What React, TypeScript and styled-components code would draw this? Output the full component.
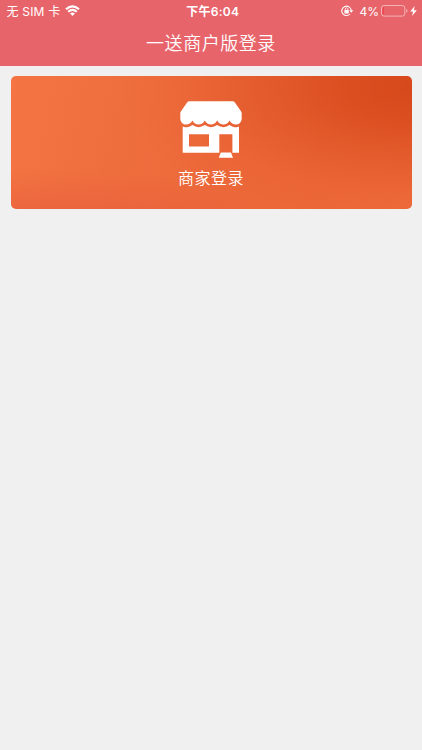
import React from "react";
import styled, { createGlobalStyle } from "styled-components";

const GlobalStyle = createGlobalStyle`
  html, body {
    margin: 0;
    background: #f0f0f0;
  }
  body {
    font-family: Inter, "Noto Sans CJK SC", sans-serif;
    color: #fff;
    overflow: hidden;
  }
`;

const Screen = styled.div`
  min-height: 100vh;
  display: flex;
  flex-direction: column;
`;

const Header = styled.header`
  height: 65.6px;
  background: #e8646b;
  display: flex;
  flex-direction: column;
`;

const StatusBar = styled.div`
  height: 22px;
  display: grid;
  grid-template-columns: 1fr auto 1fr;
  align-items: start;
  padding: 0 5px 0 6.5px;
  box-sizing: border-box;
  white-space: nowrap;
`;

const StatusGroup = styled.div<{ $end?: boolean }>`
  display: flex;
  align-items: center;
  justify-content: ${(p) => (p.$end ? "flex-end" : "flex-start")};
  height: 21px;
`;

const StatusText = styled.span<{ $bold?: boolean; $spacing?: number; $left?: number }>`
  display: block;
  font-size: 12px;
  line-height: 23px;
  font-weight: ${(p) => (p.$bold ? 600 : 400)};
  letter-spacing: ${(p) => p.$spacing ?? 0}px;
  margin: 0 0 -2px ${(p) => p.$left ?? 0}px;
`;

const Glyph = styled.svg<{ $left?: number }>`
  display: block;
  flex: none;
  margin-left: ${(p) => p.$left ?? 0}px;
`;

const Title = styled.h1`
  margin: 0;
  height: 43px;
  line-height: 40px;
  text-align: center;
  font-size: 18px;
  font-weight: 350;
  letter-spacing: 0.55px;
  font-family: "Noto Sans CJK SC", sans-serif;
`;

const Content = styled.main`
  padding: 10px 10.5px;
`;

const LoginCard = styled.button`
  width: 100%;
  height: 133.5px;
  padding: 25px 0 0;
  border: 0;
  border-radius: 5px;
  display: flex;
  flex-direction: column;
  align-items: center;
  color: #fff;
  background:
    radial-gradient(ellipse 300px 140px at 102% 8%, #d6481a 0%, rgba(216, 74, 28, 0.85) 25%, rgba(220, 80, 32, 0.52) 52%, rgba(228, 90, 42, 0.2) 78%, rgba(236, 104, 58, 0) 100%),
    radial-gradient(ellipse 230px 60px at 8% 115%, rgba(231, 92, 59, 0.85), rgba(235, 100, 60, 0) 100%),
    linear-gradient(102deg, #f47543 0%, #ef6e3e 28%, #ec683a 52%, #ec6839 75%, #ee6b3b 100%);
`;

const CardLabel = styled.span`
  margin-top: 6px;
  line-height: 26px;
  font-family: "Noto Sans CJK SC", sans-serif;
  font-size: 16px;
  font-weight: 350;
  letter-spacing: 0.5px;
`;

const WifiIcon = () => (
  <Glyph $left={5} width="15" height="12" viewBox="0 0 15 12" fill="none" stroke="#fff">
    <path d="M1 4.3Q7.5-1.7 14 4.3" strokeWidth="2.1" />
    <path d="M3.2 6.8Q7.5 3 11.8 6.8" strokeWidth="2" />
    <path d="M5.1 8.5Q7.5 6.6 9.9 8.5L7.5 11Z" fill="#fff" stroke="none" />
  </Glyph>
);

const RotationLockIcon = () => (
  <Glyph width="13" height="12" viewBox="0 0 13 12" fill="none" stroke="#fff">
    <path d="M9 9A4.7 4.7 0 1 1 10.2 5.4" strokeWidth="1.1" />
    <path d="M8.2 5.2H12.3L10.2 7.8Z" fill="#fff" stroke="none" />
    <rect x="3.4" y="5" width="4.4" height="3.4" rx=".4" fill="#fff" stroke="none" />
    <path d="M4.3 5.3V4.1a1.3 1.3 0 0 1 2.6 0v1.2" strokeWidth=".8" />
  </Glyph>
);

const BatteryIcon = () => (
  <Glyph $left={2} width="27" height="12" viewBox="0 0 27 12">
    <rect x=".5" y=".5" width="23.3" height="10.6" rx="2.5" fill="none" stroke="#fff" strokeOpacity=".5" />
    <path d="M2.6 2Q1.8 2 1.8 3v5.6q0 1 .8 1Z" fill="#f5323c" />
    <path d="M25.2 3.9q1.3.6 1.3 1.9t-1.3 1.9Z" fill="#fff" fillOpacity=".5" />
  </Glyph>
);

const ChargingIcon = () => (
  <Glyph $left={2} width="7" height="10" viewBox="0 0 7 10">
    <path d="M4.7 0 .2 5.5H3L2.1 10 6.8 4.2H3.9Z" fill="#fff" />
  </Glyph>
);

const StoreIcon = () => (
  <Glyph width="62" height="57" viewBox="0 0 62 57" fill="#fff">
    <path d="M9.4.3H52.8Q54 .3 54.7 1.3L61 10.2Q61.7 11.3 61.7 12.5V17.2C61.7 24.8 52.5 25.4 49.6 19.6C47 24.8 39.8 24.8 37.2 19.6C34.6 24.8 27.4 24.8 24.8 19.6C22.2 24.8 15 24.8 12.4 19.6C9.5 25.4.3 24.8.3 17.2V12.5Q.3 11.3 1 10.2L7.3 1.3Q8 .3 9.4.3Z" />
    <path
      fillRule="evenodd"
      d="M2.7 25.4Q8.7 27.6 12.4 24.1Q18.6 28.4 24.8 24.1Q31 28.4 37.2 24.1Q43.4 28.4 49.6 24.1Q53.3 27.6 59 25.4V51.8H52.4V33.2H39.3V51.8H2.7ZM9 33.2V45.5H29V33.2Z"
    />
    <path d="M40.8 51.5H51L53 56.8H38.8Z" />
  </Glyph>
);

export default function App() {
  return (
    <>
      <GlobalStyle />
      <Screen>
        <Header>
          <StatusBar>
            <StatusGroup>
              <StatusText $spacing={0.2}>无 SIM 卡</StatusText>
              <WifiIcon />
            </StatusGroup>
            <StatusText $bold $spacing={0.3} $left={2}>下午6:04</StatusText>
            <StatusGroup $end>
              <RotationLockIcon />
              <StatusText $left={5}>4%</StatusText>
              <BatteryIcon />
              <ChargingIcon />
            </StatusGroup>
          </StatusBar>
          <Title>一送商户版登录</Title>
        </Header>
        <Content>
          <LoginCard type="button">
            <StoreIcon />
            <CardLabel>商家登录</CardLabel>
          </LoginCard>
        </Content>
      </Screen>
    </>
  );
}
